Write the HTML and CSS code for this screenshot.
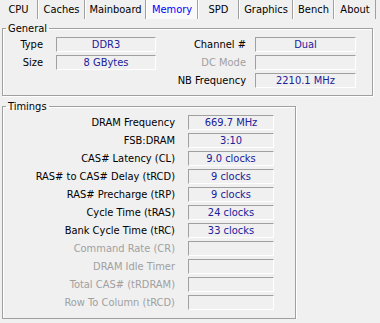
FILE: index.html
```html
<!DOCTYPE html>
<html lang="en">

<head>
  <meta charset="UTF-8" />
  <title>CPU-Z Memory</title>
  <link rel="stylesheet" href="styles.css">
</head>

<body>
  <div class="tabs">
    <div class="tab">CPU</div>
    <div class="tab">Caches</div>
    <div class="tab">Mainboard</div>
    <div class="tab active">Memory</div>
    <div class="tab">SPD</div>
    <div class="tab">Graphics</div>
    <div class="tab">Bench</div>
    <div class="tab">About</div>
  </div>

  <div class="page">
    <fieldset class="group general">
      <legend>General</legend>
      <div class="general-grid">
        <span class="label">Type</span>
        <span class="field">DDR3</span>
        <span class="label">Channel #</span>
        <span class="field">Dual</span>

        <span class="label">Size</span>
        <span class="field">8 GBytes</span>
        <span class="label disabled">DC Mode</span>
        <span class="field"></span>

        <span class="label"></span>
        <span></span>
        <span class="label">NB Frequency</span>
        <span class="field">2210.1 MHz</span>
      </div>
    </fieldset>

    <fieldset class="group timings">
      <legend>Timings</legend>
      <div class="timings-grid">
        <span class="label">DRAM Frequency</span>
        <span class="field">669.7 MHz</span>
        <span class="label">FSB:DRAM</span>
        <span class="field">3:10</span>
        <span class="label">CAS# Latency (CL)</span>
        <span class="field">9.0 clocks</span>
        <span class="label">RAS# to CAS# Delay (tRCD)</span>
        <span class="field">9 clocks</span>
        <span class="label">RAS# Precharge (tRP)</span>
        <span class="field">9 clocks</span>
        <span class="label">Cycle Time (tRAS)</span>
        <span class="field">24 clocks</span>
        <span class="label">Bank Cycle Time (tRC)</span>
        <span class="field">33 clocks</span>
        <span class="label disabled">Command Rate (CR)</span>
        <span class="field"></span>
        <span class="label disabled">DRAM Idle Timer</span>
        <span class="field"></span>
        <span class="label disabled">Total CAS# (tRDRAM)</span>
        <span class="field"></span>
        <span class="label disabled">Row To Column (tRCD)</span>
        <span class="field"></span>
      </div>
    </fieldset>
  </div>
</body>

</html>
```

FILE: styles.css
```css
body {
  margin: 0;
  background: #f0f0f0;
  font-family: "DejaVu Sans Condensed", "DejaVu Sans", sans-serif;
  font-size: 11px;
  color: #000;
}

.tabs {
  display: grid;
  grid-template-columns: 38px 47px 61px 52px 41px 54px 41px 42px;
  height: 19px;
}

.tab {
  text-align: center;
  line-height: 19px;
  border-right: 1px solid #a0a0a0;
  border-left: 1px solid #ffffff;
}

.tab:first-child {
  border-left: none;
}

.tab.active {
  color: #0000ff;
  background: #f9f9f9;
}

.page {
  padding: 3px 0 0 2px;
}

.group {
  margin: 0;
  padding: 2px 0 0 0;
  min-inline-size: 0;
  border: 1px solid #a0a0a0;
  box-shadow: 1px 1px 0 #ffffff, inset 1px 1px 0 #ffffff;
  box-sizing: border-box;
}

.group legend {
  margin-left: 3px;
  padding: 0 2px;
  line-height: 13px;
}

.general {
  width: 371px;
  padding-bottom: 7px;
}

.timings {
  width: 294px;
  margin-top: 4px;
  padding-bottom: 8px;
}

.general-grid {
  display: grid;
  grid-template-columns: 53px 100px 99px 101px;
  grid-auto-rows: 15px;
  row-gap: 3px;
}

.timings-grid {
  display: grid;
  grid-template-columns: 185px 86px;
  grid-auto-rows: 15px;
  row-gap: 3px;
}

.general-grid .label {
  padding-right: 13px;
}

.general-grid .label:nth-child(4n+3) {
  padding-right: 9px;
}

.timings-grid .label {
  padding-right: 13px;
}

.label {
  text-align: right;
  line-height: 15px;
  white-space: nowrap;
}

.label.disabled {
  color: #a0a0a0;
}

.field {
  box-sizing: border-box;
  border-top: 1px solid #a0a0a0;
  border-left: 1px solid #a0a0a0;
  border-right: 1px solid #ffffff;
  border-bottom: 1px solid #ffffff;
  color: #20209a;
  text-align: center;
  line-height: 13px;
  white-space: nowrap;
}
```
